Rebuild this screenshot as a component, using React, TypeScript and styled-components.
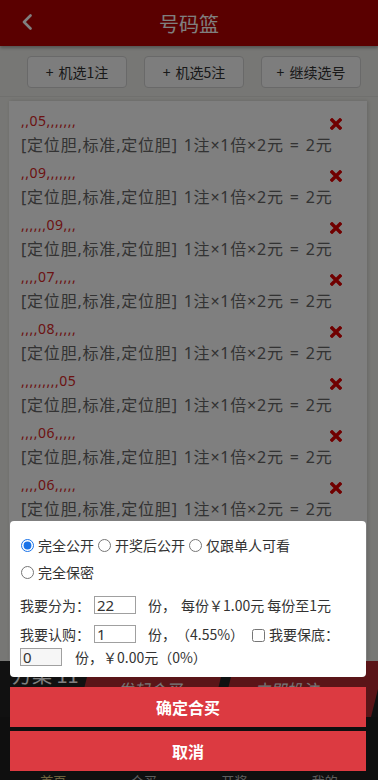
import styled, { createGlobalStyle } from 'styled-components';

const GlobalStyle = createGlobalStyle`
  * { box-sizing: border-box; }
  html, body { margin: 0; padding: 0; }
  body {
    font-family: "Noto Sans", "Noto Sans CJK SC", sans-serif;
    background: #efefea;
    color: #333;
    text-spacing-trim: space-all;
  }
`;

interface Bet {
  code: string;
}

const bets: Bet[] = [
  { code: ',,05,,,,,,,' },
  { code: ',,09,,,,,,,' },
  { code: ',,,,,,09,,,' },
  { code: ',,,,07,,,,,' },
  { code: ',,,,08,,,,,' },
  { code: ',,,,,,,,,05' },
  { code: ',,,,06,,,,,' },
  { code: ',,,,06,,,,,' },
  { code: ',,,,,03,,,,' },
  { code: ',,,,,,,01,,' },
  { code: ',02,,,,,,,,' },
];

const privacyOptions = ['完全公开', '开奖后公开', '仅跟单人可看', '完全保密'];
const tabs = ['首页', '合买', '开奖', '我的'];

const BackIcon = () => (
  <svg width="12" height="16" viewBox="0 0 12 16">
    <polyline points="9.5,1.5 3,8 9.5,14.5" fill="none" stroke="#fff" strokeWidth="2.6" strokeLinecap="round" strokeLinejoin="round" />
  </svg>
);

const CloseIcon = () => (
  <svg width="12" height="12" viewBox="0 0 12 12">
    <path d="M2 2 L10 10 M10 2 L2 10" stroke="#e00000" strokeWidth="3.4" strokeLinecap="square" />
  </svg>
);

const App = () => {
  return (
    <>
      <GlobalStyle />
      <Page>
        <Header>
          <BackButton><BackIcon /></BackButton>
          <Title>号码篮</Title>
        </Header>

        <Toolbar>
          <ToolButton>+ 机选1注</ToolButton>
          <ToolButton>+ 机选5注</ToolButton>
          <ToolButton>+ 继续选号</ToolButton>
        </Toolbar>

        <ListArea>
          <BetCard>
            {bets.map((bet, i) => (
              <BetItem key={i}>
                <BetCode>
                  <DeleteButton><CloseIcon /></DeleteButton>
                  {bet.code}
                </BetCode>
                <BetDetail>[定位胆,标准,定位胆] 1注×1倍×2元 = 2元</BetDetail>
              </BetItem>
            ))}
          </BetCard>
        </ListArea>

        <FooterBar>
          <Summary>方案 11注</Summary>
          <SlantButton>发起合买</SlantButton>
          <SlantButton $last>立即投注</SlantButton>
        </FooterBar>

        <TabBar>
          {tabs.map((t, i) => (
            <Tab key={t} $active={i === 0}>{t}</Tab>
          ))}
        </TabBar>

        <Overlay>
          <Sheet>
            <RadioGroup>
              {privacyOptions.map((opt, i) => (
                <RadioLabel key={opt}>
                  <Radio type="radio" name="privacy" defaultChecked={i === 0} />
                  {opt}
                </RadioLabel>
              ))}
            </RadioGroup>

            <FormRow>
              <Field $gap={12}>
                我要分为：<NumInput defaultValue="22" $offset={4} />
              </Field>
              <Field $gap={5}>份，</Field>
              <Field>每份￥1.00元 每份至1元</Field>
            </FormRow>

            <FormRow>
              <Field $gap={12}>
                我要认购：<NumInput defaultValue="1" $offset={4} />
              </Field>
              <Field $gap={8}>份，（4.55%）</Field>
              <Field>
                <Check type="checkbox" />
                我要保底：
              </Field>
              <Field>
                <NumInput defaultValue="0" $muted readOnly />
                <Suffix>份，￥0.00元（0%）</Suffix>
              </Field>
            </FormRow>
          </Sheet>

          <ActionButton>确定合买</ActionButton>
          <ActionButton>取消</ActionButton>
        </Overlay>
      </Page>
    </>
  );
};

const Page = styled.div`
  position: relative;
  width: 378px;
  height: 780px;
  display: flex;
  flex-direction: column;
  overflow: hidden;
  background: #efefea;
`;

const Header = styled.header`
  height: 46px;
  flex-shrink: 0;
  background: #b40000;
  display: flex;
  align-items: center;
  justify-content: center;
  position: relative;
  box-shadow: 0 2px 3px rgba(0, 0, 0, 0.3);
  z-index: 1;
`;

const BackButton = styled.div`
  position: absolute;
  left: 21px;
  top: 14px;
  display: flex;
`;

const Title = styled.h1`
  margin: 0;
  font-size: 20px;
  font-weight: normal;
  color: #fff;
  font-family: "Noto Sans CJK SC", sans-serif;
`;

const Toolbar = styled.div`
  flex-shrink: 0;
  height: 51px;
  display: flex;
  align-items: flex-start;
  gap: 17px;
  padding: 10px 0 0 27px;
  border-bottom: 1px solid #e0e0dc;
`;

const ToolButton = styled.button`
  width: 100px;
  height: 32px;
  border: 1px solid #d2d2d2;
  border-radius: 4px;
  background: #fafafa;
  color: #333;
  font-family: "Noto Sans CJK SC", sans-serif;
  font-size: 14px;
  word-spacing: 2px;
  padding: 0;
`;

const ListArea = styled.div`
  flex: 1;
  min-height: 0;
  padding: 4px 11px 0 9px;
`;

const BetCard = styled.div`
  background: #fff;
  height: 100%;
  padding: 6px 12px 0;
  box-shadow: 1px 0 4px rgba(0, 0, 0, 0.15);
  overflow: hidden;
`;

const BetItem = styled.div`
  padding: 2px 0;
`;

const BetCode = styled.div`
  line-height: 24px;
  font-size: 14px;
  letter-spacing: 0.5px;
  color: #d82626;
`;

const DeleteButton = styled.span`
  float: right;
  display: flex;
  margin: 9px 13px 0 0;
`;

const BetDetail = styled.div`
  line-height: 24px;
  font-size: 16px;
  letter-spacing: 0.8px;
  word-spacing: 1px;
  color: #666;
  white-space: nowrap;
`;

const FooterBar = styled.div`
  height: 56px;
  flex-shrink: 0;
  background: #232323;
  display: flex;
  align-items: stretch;
  overflow: hidden;
`;

const Summary = styled.div`
  width: 104px;
  padding-left: 12px;
  display: flex;
  align-items: center;
  font-size: 20px;
  color: #fff;
  font-family: "Noto Sans CJK SC", sans-serif;
`;

const SlantButton = styled.div<{ $last?: boolean }>`
  flex: ${(p) => (p.$last ? '0 0 150px' : '0 0 134px')};
  margin-left: ${(p) => (p.$last ? '10px' : '0')};
  background: #b42a30;
  transform: skewX(-14deg);
  display: flex;
  align-items: center;
  justify-content: ${(p) => (p.$last ? 'flex-start' : 'center')};
  padding-left: ${(p) => (p.$last ? '28px' : '0')};
  color: #eee;
  font-size: 16px;
  font-family: "Noto Sans CJK SC", sans-serif;
`;

const TabBar = styled.nav`
  height: 63px;
  flex-shrink: 0;
  background: #1e1e1e;
  display: grid;
  grid-template-columns: repeat(4, 1fr);
  padding: 0 8px;
`;

const Tab = styled.div<{ $active?: boolean }>`
  display: flex;
  align-items: flex-end;
  justify-content: center;
  font-size: 13px;
  line-height: 17px;
  margin-bottom: -9px;
  color: ${(p) => (p.$active ? '#d8c27a' : '#bbb')};
  font-family: "Noto Sans CJK SC", sans-serif;
`;

const Overlay = styled.div`
  position: absolute;
  inset: 0;
  z-index: 10;
  background: rgba(0, 0, 0, 0.5);
  display: flex;
  flex-direction: column;
  justify-content: flex-end;
  align-items: stretch;
  gap: 4px;
  padding: 0 12px 9px 10px;
`;

const Sheet = styled.div`
  background: #fff;
  border-radius: 4px;
  padding: 10px 10px 11px;
  margin-bottom: 6px;
  font-family: "Noto Sans CJK SC", sans-serif;
  font-size: 14px;
  color: #333;
`;

const RadioGroup = styled.div`
  display: flex;
  flex-wrap: wrap;
  column-gap: 3px;
`;

const RadioLabel = styled.label`
  display: flex;
  align-items: center;
  height: 27px;
  white-space: nowrap;
`;

const Radio = styled.input`
  width: 13px;
  height: 13px;
  margin: 1px 4px 0 1px;
  accent-color: #1a73e8;
`;

const FormRow = styled.div`
  display: flex;
  flex-wrap: wrap;
  align-items: center;
  row-gap: 5px;
  margin-top: 11px;
`;

const Field = styled.div<{ $gap?: number }>`
  display: flex;
  align-items: center;
  height: 18px;
  white-space: pre;
  margin-right: ${(p) => p.$gap ?? 0}px;
`;

const NumInput = styled.input<{ $muted?: boolean; $offset?: number }>`
  width: 42px;
  height: 18px;
  margin: 0 0 0 ${(p) => p.$offset ?? 0}px;
  padding: 0 2px;
  border: 1px solid #a0a0a0;
  border-radius: 0;
  font-size: 15px;
  font-family: "Noto Sans", sans-serif;
  color: #333;
  background: ${(p) => (p.$muted ? '#f6f6f6' : '#fff')};
  outline: none;
`;

const Check = styled.input`
  width: 13px;
  height: 13px;
  margin: 2px 4px 0 0;
`;

const Suffix = styled.span`
  margin-left: 13px;
`;

const ActionButton = styled.button`
  height: 40px;
  width: 100%;
  border: none;
  background: #dc3a41;
  color: #fff;
  font-size: 16px;
  font-weight: bold;
  font-family: "Noto Sans CJK SC", sans-serif;
  padding: 0;
`;

export default App;
